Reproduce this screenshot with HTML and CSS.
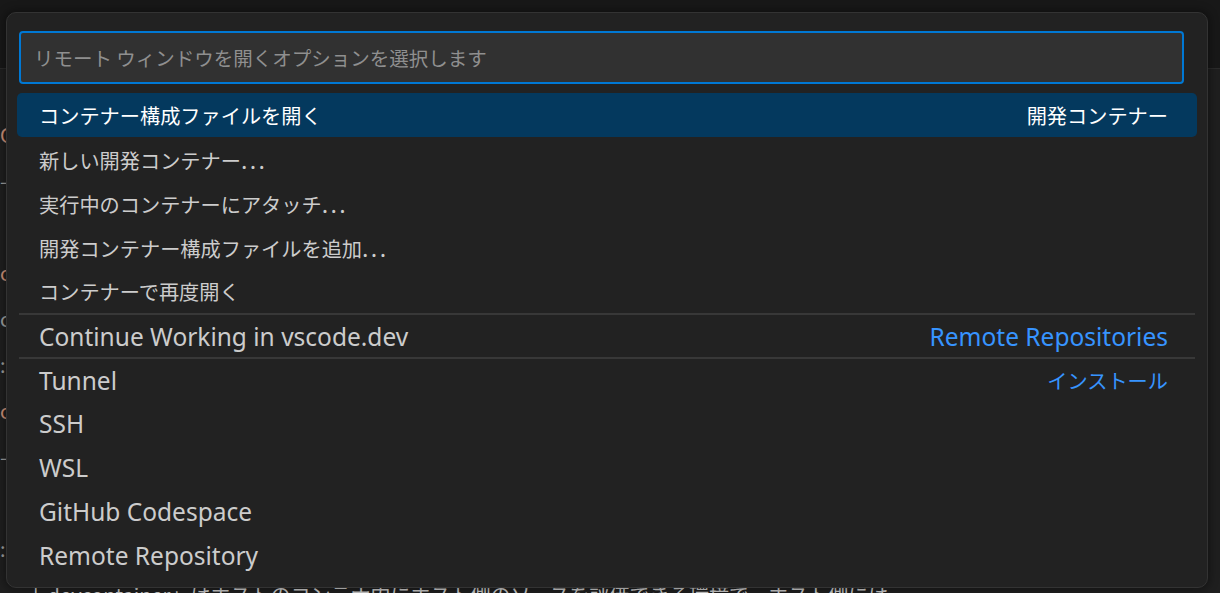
FILE: index.html
```html
<!DOCTYPE html>
<html lang="ja">
<head>
<meta charset="utf-8">
<title>Remote window</title>
<link rel="stylesheet" href="styles.css">
</head>
<body>
<div class="workbench">
  <div class="tabbar"></div>
  <div class="editor">
    <div class="line orange">C</div>
    <div class="line grey">—</div>
    <div class="line blue">⋮</div>
    <div class="line orange">o</div>
    <div class="line grey">c</div>
    <div class="line grey">:</div>
    <div class="line orange">o</div>
    <div class="line grey">—</div>
    <div class="line blue">⋮</div>
    <div class="line grey">:</div>
    <div class="line last">「.devcontainer」はホストのコンテナ内にホスト側のソースを評価できる環境で、ホスト側には</div>
  </div>
</div>

<div class="quick-input">
  <div class="qi-header">
    <div class="qi-input">リモート ウィンドウを開くオプションを選択します</div>
  </div>
  <div class="qi-list">
    <div class="row selected"><span class="label">コンテナー構成ファイルを開く</span><span class="desc">開発コンテナー</span></div>
    <div class="row"><span class="label">新しい開発コンテナー<span class="dots">...</span></span></div>
    <div class="row"><span class="label">実行中のコンテナーにアタッチ<span class="dots">...</span></span></div>
    <div class="row"><span class="label">開発コンテナー構成ファイルを追加<span class="dots">...</span></span></div>
    <div class="row"><span class="label">コンテナーで再度開く</span></div>
    <div class="row sep"><span class="label en">Continue Working in vscode.dev</span><span class="desc link en">Remote Repositories</span></div>
    <div class="row sep"><span class="label en">Tunnel</span><span class="desc link">インストール</span></div>
    <div class="row"><span class="label en">SSH</span></div>
    <div class="row"><span class="label en">WSL</span></div>
    <div class="row"><span class="label en">GitHub Codespace</span></div>
    <div class="row"><span class="label en">Remote Repository</span></div>
  </div>
</div>
</body>
</html>
```

FILE: styles.css
```css
html, body {
  margin: 0;
  padding: 0;
}
body {
  width: 1220px;
  height: 593px;
  overflow: hidden;
  background: #1f1f1f;
  font-family: "Noto Sans CJK JP", sans-serif;
  position: relative;
}
.workbench {
  display: flex;
  flex-direction: column;
  height: 593px;
  overflow: hidden;
}
.tabbar {
  height: 68px;
  background: #181818;
  border-bottom: 1px solid #2b2b2b;
  flex: none;
}
.editor {
  flex: 1;
  min-height: 0;
  overflow: hidden;
  background: #1f1f1f;
  padding-top: 51px;
  font-family: "Noto Sans CJK JP", sans-serif;
  font-size: 20px;
  color: #cccccc;
}
.line {
  height: 46px;
  line-height: 30px;
  white-space: nowrap;
}
.orange { color: #ce9178; }
.grey { color: #9d9d9d; }
.blue { color: #3794ff; }
.line.last {
  padding-left: 22px;
  color: #cccccc;
}

.quick-input {
  position: absolute;
  left: 6px;
  top: 12px;
  width: 1202px;
  height: 576px;
  box-sizing: border-box;
  background: #222222;
  border: 1px solid #333333;
  border-radius: 10px;
  box-shadow: 0 0 8px 2px rgba(0, 0, 0, 0.36);
  padding: 18px 0 9px 0;
}
.qi-header {
  padding: 0 23px 0 12px;
}
.qi-input {
  height: 53px;
  box-sizing: border-box;
  border: 2px solid #0078d4;
  border-radius: 4px;
  background: #313131;
  color: #8f8f8f;
  font-size: 19.5px;
  display: flex;
  align-items: center;
  padding-left: 13px;
  white-space: nowrap;
}
.qi-list {
  margin-top: 9px;
  padding: 0 10px;
}
.row {
  height: 44px;
  box-sizing: border-box;
  display: flex;
  align-items: center;
  justify-content: space-between;
  padding: 0 29px 0 22px;
  font-size: 20.2px;
  color: #cccccc;
  border-radius: 5px;
  white-space: nowrap;
}
.row.selected {
  background: #04395e;
  color: #ffffff;
}
.row.sep {
  border-top: 2px solid #383838;
  border-radius: 0;
  margin: 0 2px;
  padding: 0 27px 0 20px;
}
.en {
  font-family: "Noto Sans", sans-serif;
  font-size: 24.5px;
}
.dots {
  font-family: "Noto Sans", sans-serif;
  font-size: 24px;
  letter-spacing: 2.4px;
}
.desc.link {
  color: #3794ff;
}
```
